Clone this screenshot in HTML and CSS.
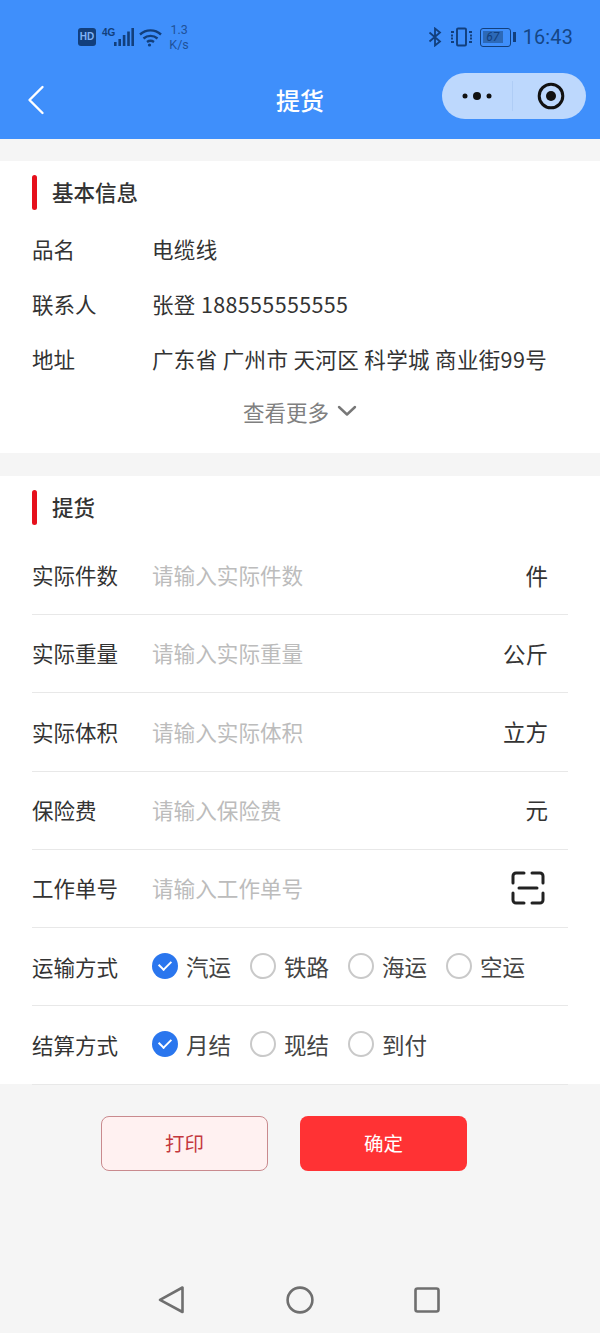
FILE: index.html
```html
<!DOCTYPE html>
<html lang="zh-CN">
<head>
    <meta charset="UTF-8">
    <meta name="viewport" content="width=device-width, initial-scale=1.0">
    <title>提货</title>
    <link rel="stylesheet" href="styles.css">
</head>
<body>

    <div class="header">
        <div class="status-bar">
            <div class="status-left">
                <span class="hd">HD</span>
                <span class="net">4G</span>
                <svg class="signal" width="20" height="19" viewBox="0 0 20 19">
                    <rect x="0" y="14" width="2.6" height="4" />
                    <rect x="4.4" y="11" width="2.6" height="7" />
                    <rect x="8.8" y="7" width="2.6" height="11" />
                    <rect x="13.2" y="3.5" width="2.6" height="14.5" />
                    <rect x="17.4" y="0" width="2.6" height="18" />
                </svg>
                <svg class="wifi" width="23" height="19" viewBox="0 0 23 19" fill="none" stroke="#123f7c" stroke-width="2.4">
                    <path d="M1 6.5C7 1 16 1 22 6.5" />
                    <path d="M4.5 10.5C8.5 7 14.5 7 18.5 10.5" />
                    <path d="M8 14C10 12.6 13 12.6 15 14" />
                    <circle cx="10.5" cy="17" r="1.6" fill="#123f7c" stroke="none" />
                </svg>
                <span class="speed">1.3<br>K/s</span>
            </div>
            <div class="status-right">
                <svg width="14" height="20" viewBox="0 0 14 20" fill="none" stroke="#123f7c" stroke-width="1.8">
                    <path d="M1.5 5.5L12 14.5L7 18.5V1.5L12 5.5L1.5 14.5" />
                </svg>
                <svg class="vibrate" width="23" height="20" viewBox="0 0 23 20" fill="none" stroke="#123f7c" stroke-width="1.9">
                    <rect x="7" y="1.5" width="9" height="17" rx="1" />
                    <path d="M1 5H4M1 8.500H3M1 11.500H3M1 15H4M19 5H22M20 8.500H22M20 11.500H22M19 15H22" />
                </svg>
                <span class="battery"><span class="battery-level">67</span></span>
                <span class="clock">16:43</span>
            </div>
        </div>
        <div class="nav-bar">
            <svg class="back" width="18" height="30" viewBox="0 0 18 30" fill="none" stroke="#fff" stroke-width="2.4" stroke-linecap="round" stroke-linejoin="round">
                <path d="M15.5 2L2.5 15L15.5 28" />
            </svg>
            <div class="nav-title">提货</div>
            <div class="capsule">
                <div class="capsule-part">
                    <svg width="30" height="12" viewBox="0 0 30 12" fill="#111">
                        <circle cx="3" cy="6" r="2.5" />
                        <circle cx="15" cy="6" r="4" />
                        <circle cx="27" cy="6" r="2.5" />
                    </svg>
                </div>
                <div class="capsule-part capsule-right">
                    <svg width="28" height="28" viewBox="0 0 28 28">
                        <circle cx="14" cy="14" r="11.8" fill="none" stroke="#111" stroke-width="3" />
                        <circle cx="14" cy="14" r="5" fill="#111" />
                    </svg>
                </div>
            </div>
        </div>
    </div>

    <div class="card info-card">
        <div class="section-title">基本信息</div>
        <div class="info-row"><span class="label">品名</span><span class="value">电缆线</span></div>
        <div class="info-row"><span class="label">联系人</span><span class="value">张登 188555555555</span></div>
        <div class="info-row"><span class="label">地址</span><span class="value">广东省 广州市 天河区 科学城 商业街99号</span></div>
        <div class="more">
            查看更多
            <svg width="20" height="12" viewBox="0 0 20 12" fill="none" stroke="#777" stroke-width="2.4" stroke-linecap="round" stroke-linejoin="round">
                <path d="M2 2L10 9.5L18 2" />
            </svg>
        </div>
    </div>

    <div class="card form-card">
        <div class="section-title">提货</div>
        <div class="form-list">
            <div class="form-row"><span class="label">实际件数</span><span class="placeholder">请输入实际件数</span><span class="unit">件</span></div>
            <div class="form-row"><span class="label">实际重量</span><span class="placeholder">请输入实际重量</span><span class="unit">公斤</span></div>
            <div class="form-row"><span class="label">实际体积</span><span class="placeholder">请输入实际体积</span><span class="unit">立方</span></div>
            <div class="form-row"><span class="label">保险费</span><span class="placeholder">请输入保险费</span><span class="unit">元</span></div>
            <div class="form-row">
                <span class="label">工作单号</span><span class="placeholder">请输入工作单号</span>
                <svg class="scan" width="34" height="34" viewBox="0 0 34 34" fill="none" stroke="#222" stroke-width="3" stroke-linecap="round">
                    <path d="M13 2H5C3.3 2 2 3.3 2 5V12" />
                    <path d="M21 2H29C30.7 2 32 3.3 32 5V12" />
                    <path d="M13 32H5C3.3 32 2 30.7 2 29V22" />
                    <path d="M21 32H29C30.7 32 32 30.7 32 29V22" />
                    <path d="M8 17H26" />
                </svg>
            </div>
            <div class="form-row">
                <span class="label">运输方式</span>
                <div class="radio-group">
                    <span class="radio checked">汽运</span>
                    <span class="radio">铁路</span>
                    <span class="radio">海运</span>
                    <span class="radio">空运</span>
                </div>
            </div>
            <div class="form-row">
                <span class="label">结算方式</span>
                <div class="radio-group">
                    <span class="radio checked">月结</span>
                    <span class="radio">现结</span>
                    <span class="radio">到付</span>
                </div>
            </div>
        </div>
    </div>

    <div class="actions">
        <div class="btn btn-plain">打印</div>
        <div class="btn btn-solid">确定</div>
    </div>

    <div class="system-nav">
        <svg width="28" height="30" viewBox="0 0 28 30" fill="none" stroke="#6f6f6f" stroke-width="2.6" stroke-linejoin="round">
            <path d="M24.5 2.5V27L2 14.8Z" />
        </svg>
        <svg width="28" height="28" viewBox="0 0 28 28" fill="none" stroke="#6f6f6f" stroke-width="2.6">
            <circle cx="14" cy="14" r="12.4" />
        </svg>
        <svg width="26" height="26" viewBox="0 0 26 26" fill="none" stroke="#6f6f6f" stroke-width="2.6">
            <rect x="1.5" y="1.5" width="23" height="23" rx="2" />
        </svg>
    </div>

</body>
</html>
```

FILE: styles.css
```css
*, *::before, *::after {
    box-sizing: border-box;
}
body {
    font-family: "Noto Sans CJK SC", "Noto Sans", sans-serif;
    margin: 0;
    padding: 0;
    width: 600px;
    height: 1333px;
    overflow: hidden;
    background-color: #f5f5f5;
    color: #333;
    font-size: 21.5px;
}

/* header */
.header {
    height: 139px;
    background-color: #3f8ffb;
    padding-top: 20px;
}
.status-bar {
    display: flex;
    justify-content: space-between;
    align-items: center;
    height: 34px;
    padding: 0 27px 0 78px;
    color: #123f7c;
}
.status-left,
.status-right {
    display: flex;
    align-items: center;
}
.hd {
    width: 18px;
    height: 18px;
    border-radius: 3px;
    background-color: #123f7c;
    color: #7fb2f5;
    font-family: "Liberation Sans", sans-serif;
    font-size: 10px;
    font-weight: bold;
    line-height: 18px;
    text-align: center;
}
.net {
    align-self: flex-start;
    margin: 6px 0 0 6px;
    font-family: "Liberation Sans", sans-serif;
    font-size: 10px;
    font-weight: bold;
    line-height: 10px;
}
.signal {
    fill: #123f7c;
    margin: 0 5px 0 -1px;
}
.speed {
    margin-left: 7px;
    font-family: "Roboto", sans-serif;
    font-size: 12.5px;
    line-height: 15px;
    text-align: center;
    color: #1f5299;
}
.status-right svg {
    margin-right: 5px;
}
.status-right .vibrate {
    margin: 0 7px 0 3px;
}
.battery {
    position: relative;
    width: 31px;
    height: 19px;
    margin: 0 5px 0 0;
    border: 1.6px solid #123f7c;
    border-radius: 3px;
    padding: 2px;
}
.battery::after {
    content: "";
    position: absolute;
    right: -6px;
    top: 3px;
    width: 2.5px;
    height: 10px;
    background-color: #123f7c;
}
.battery-level {
    display: block;
    width: 20px;
    height: 12px;
    background-color: #2c69b8;
    font-family: "Roboto", sans-serif;
    font-size: 12px;
    font-style: italic;
    line-height: 12px;
    text-align: center;
}
.clock {
    margin-left: 7px;
    font-family: "Roboto", sans-serif;
    font-size: 19.8px;
    letter-spacing: 0.2px;
    color: #154686;
}
.nav-bar {
    position: relative;
    display: flex;
    align-items: center;
    justify-content: space-between;
    height: 46px;
    margin-top: 19px;
    padding: 0 14px 0 27px;
}
.back {
    margin-top: 7px;
}
.nav-title {
    position: absolute;
    left: 0;
    right: 0;
    padding-top: 6px;
    text-align: center;
    color: #fff;
    font-size: 24px;
    font-weight: 500;
}
.capsule {
    display: flex;
    width: 144px;
    height: 46px;
    border-radius: 23px;
    background-color: #bdd8fd;
}
.capsule-part {
    flex: 1;
    display: flex;
    align-items: center;
    justify-content: center;
}
.capsule-right {
    border-left: 1px solid #afcdf6;
    margin: 8px 0;
    padding-left: 4px;
}

/* cards */
.card {
    background-color: #fff;
    padding: 0 32px;
}
.info-card {
    height: 292px;
    margin-top: 22px;
    padding-top: 14px;
}
.form-card {
    height: 608px;
    margin-top: 23px;
    padding-top: 14px;
}
.section-title {
    display: flex;
    align-items: center;
    gap: 15px;
    height: 35px;
    padding-bottom: 2px;
    font-weight: 500;
    color: #333;
}
.section-title::before {
    content: "";
    width: 5px;
    height: 35px;
    margin-bottom: -2px;
    border-radius: 3px;
    background-color: #e6101c;
}
.label {
    width: 120px;
    flex-shrink: 0;
    color: #333;
}
.info-row {
    display: flex;
    align-items: center;
    height: 55px;
}
.info-card .section-title {
    margin-bottom: 11px;
}
.value {
    color: #333;
    letter-spacing: 0.36px;
}
.more {
    display: flex;
    align-items: center;
    justify-content: center;
    gap: 8px;
    height: 50px;
    color: #808080;
}
.form-list {
    margin-top: 11.7px;
}
.form-row {
    display: flex;
    align-items: center;
    height: 78.3px;
    padding-right: 20px;
    padding-bottom: 1.5px;
    border-bottom: 1.5px solid #e8e8e8;
}
.placeholder {
    flex: 1;
    color: #bcbcbc;
    font-size: 21.6px;
}
.unit {
    color: #333;
    font-size: 22.5px;
}
.scan {
    margin-right: 3px;
}
.radio-group {
    display: flex;
    gap: 19px;
}
.radio {
    position: relative;
    display: flex;
    align-items: center;
    gap: 8px;
    color: #444;
    font-size: 22.5px;
}
.radio::before {
    content: "";
    width: 26px;
    height: 26px;
    border: 2px solid #c9c9c9;
    border-radius: 50%;
}
.radio.checked::before {
    border: none;
    background-color: #2a76ee;
}
.radio.checked::after {
    content: "";
    position: absolute;
    left: 7px;
    top: 50%;
    width: 12px;
    height: 8px;
    margin-top: -6px;
    border-left: 2.4px solid #fff;
    border-bottom: 2.4px solid #fff;
    transform: rotate(-45deg);
}

/* bottom buttons */
.actions {
    display: flex;
    justify-content: center;
    gap: 32px;
    margin-top: 32px;
    padding-right: 32px;
}
.btn {
    display: flex;
    align-items: center;
    justify-content: center;
    width: 167px;
    height: 55px;
    padding-bottom: 3px;
    border-radius: 8px;
    font-size: 19.5px;
}
.btn-plain {
    background-color: #fff1f1;
    border: 1.5px solid #c98a8e;
    color: #c4383d;
}
.btn-solid {
    background-color: #ff3234;
    color: #fff;
}
.system-nav {
    display: flex;
    align-items: center;
    justify-content: space-between;
    margin-top: 114px;
    padding: 0 160px 0 158px;
}
```
